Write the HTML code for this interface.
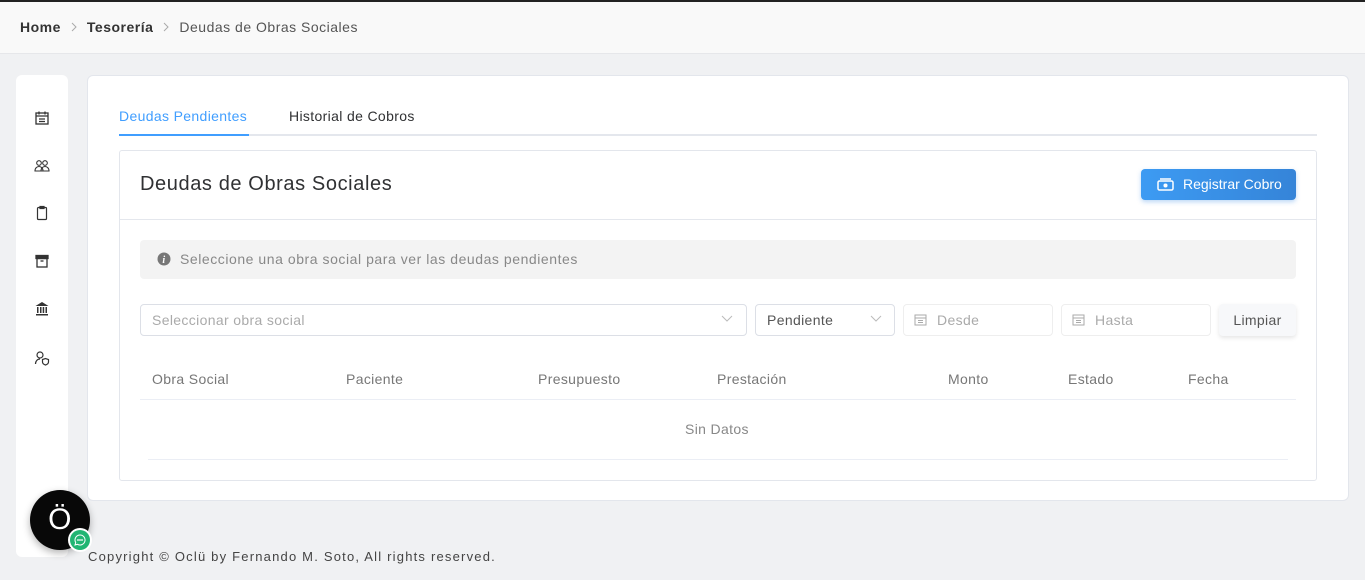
<!DOCTYPE html>
<html><head><meta charset="utf-8"><style>
*{box-sizing:border-box;margin:0;padding:0}
body{width:1365px;height:580px;overflow:hidden;background:#f0f1f3;font-family:"Liberation Sans",sans-serif;position:relative;color:#333;letter-spacing:.35px}
.abs{position:absolute}
.top{left:0;top:0;width:1365px;height:54px;background:#f9f9f9;border-top:2px solid #222;border-bottom:1px solid #e6e7ea}
.bc{left:20px;top:19px;font-size:14px;color:#555;letter-spacing:.5px}
.bc b{color:#333}
.bc .sep{color:#aaa;margin:0 9px;display:inline-block;width:8px}
.side{left:16px;top:75px;width:52px;height:482px;background:#fff;border-radius:6px}
.ic{position:absolute;left:18px;width:16px;height:16px}
.main{left:87px;top:75px;width:1262px;height:426px;background:#fff;border:1px solid #e3e6ec;border-radius:6px}
.tab{font-size:14px;top:108px}
.inner{left:119px;top:150px;width:1198px;height:331px;border:1px solid #e3e6ec;border-radius:3px;background:#fff}
.inp{height:32px;border:1px solid #dcdfe6;border-radius:4px;background:#fff;font-size:14px;color:#aaa;padding:7px 11px}
.th{top:371px;font-size:14px;color:#777}
</style></head><body>
<div class="abs top"></div>
<div class="abs bc"><b>Home</b><span class="sep"><svg width="8" height="10"><path d="M2 1l4 4-4 4" fill="none" stroke="#aaa"/></svg></span><b>Tesorería</b><span class="sep"><svg width="8" height="10"><path d="M2 1l4 4-4 4" fill="none" stroke="#aaa"/></svg></span>Deudas de Obras Sociales</div>
<div class="abs side">
<svg class="ic" style="top:35px" viewBox="0 0 16 16" fill="none" stroke="#333" stroke-width="1.3"><rect x="2" y="3" width="12" height="11"/><path d="M2 6h12M5 1.5v3M11 1.5v3M5 9h6M5 11.5h6"/></svg>
<svg class="ic" style="top:83px" viewBox="0 0 16 16" fill="none" stroke="#333" stroke-width="1.1"><circle cx="5" cy="5" r="2.3"/><circle cx="11" cy="5" r="2.3"/><path d="M1 13c0-3 2-4.5 4-4.5s4 1.5 4 4.5zM7 13c0-3 2-4.5 4-4.5s4 1.5 4 4.5z"/></svg>
<svg class="ic" style="top:130px" viewBox="0 0 16 16" fill="none" stroke="#333" stroke-width="1.2"><rect x="3.5" y="2.5" width="9" height="12" rx="1"/><rect x="6" y="1.5" width="4" height="2" fill="#333"/></svg>
<svg class="ic" style="top:178px" viewBox="0 0 16 16" fill="none" stroke="#333" stroke-width="1.3"><rect x="2" y="2.5" width="12" height="3" fill="#333"/><rect x="3" y="5.5" width="10" height="8.5"/><path d="M6.5 8h3"/></svg>
<svg class="ic" style="top:226px" viewBox="0 0 16 16" fill="#333"><path d="M8 1L1.5 5h13z"/><rect x="2" y="13" width="12" height="1.5"/><rect x="3" y="6" width="1.5" height="6"/><rect x="6" y="6" width="1.5" height="6"/><rect x="8.7" y="6" width="1.5" height="6"/><rect x="11.5" y="6" width="1.5" height="6"/></svg>
<svg class="ic" style="top:275px" viewBox="0 0 16 16" fill="none" stroke="#333" stroke-width="1.2"><circle cx="6" cy="5" r="3"/><path d="M1.5 14c0-3 2-5 4.5-5"/><path d="M8.5 9.5l3-1 3 1v2.5c0 1.5-1.5 2.5-3 3-1.5-.5-3-1.5-3-3z"/></svg>
</div>
<div class="abs main"></div>
<div class="abs tab" style="left:119px;color:#409eff">Deudas Pendientes</div>
<div class="abs tab" style="left:289px;color:#303133">Historial de Cobros</div>
<div class="abs" style="left:119px;top:134px;width:1198px;height:2px;background:#e4e7ed"></div>
<div class="abs" style="left:119px;top:134px;width:130px;height:2px;background:#409eff"></div>
<div class="abs inner"></div>
<div class="abs" style="left:140px;top:173px;font-size:20px;color:#303133;letter-spacing:.6px">Deudas de Obras Sociales</div>
<div class="abs" style="left:120px;top:219px;width:1196px;height:1px;background:#e4e7ed"></div>
<div class="abs" style="left:1141px;top:169px;width:155px;height:31px;border-radius:4px;background:linear-gradient(90deg,#3d9bf3,#3584d8);box-shadow:0 2px 5px rgba(60,140,230,.35);color:#fff;font-size:14px;padding:7px 0 0 42px;letter-spacing:0">Registrar Cobro</div>
<svg class="abs" style="left:1157px;top:178px" width="17" height="13" viewBox="0 0 17 13" fill="none" stroke="#fff" stroke-width="1.5"><rect x="1" y="3" width="15" height="9" rx="1.5"/><path d="M3 1h11"/><circle cx="8.5" cy="7.5" r="1.3" fill="#fff"/></svg>
<div class="abs" style="left:140px;top:240px;width:1156px;height:39px;background:#f3f3f3;border-radius:4px"></div>
<svg class="abs" style="left:157px;top:252px" width="14" height="14" viewBox="0 0 14 14"><circle cx="7" cy="7" r="6.5" fill="#777"/><text x="7" y="11" font-size="10" font-style="italic" font-weight="bold" fill="#fff" text-anchor="middle" font-family="Liberation Serif">i</text></svg>
<div class="abs" style="left:180px;top:251px;font-size:14px;color:#888;letter-spacing:.55px">Seleccione una obra social para ver las deudas pendientes</div>
<div class="abs inp" style="left:140px;top:304px;width:607px">Seleccionar obra social</div>
<div class="abs inp" style="left:755px;top:304px;width:140px;color:#555">Pendiente</div>
<svg class="abs" style="left:721px;top:315px" width="12" height="8"><path d="M1 1l5 5 5-5" fill="none" stroke="#bbb"/></svg>
<svg class="abs" style="left:870px;top:315px" width="12" height="8"><path d="M1 1l5 5 5-5" fill="none" stroke="#bbb"/></svg>
<div class="abs inp" style="left:903px;top:304px;width:150px;border-color:#eee;padding-left:33px">Desde</div>
<div class="abs inp" style="left:1061px;top:304px;width:150px;border-color:#eee;padding-left:33px">Hasta</div>
<svg class="abs" style="left:914px;top:313px" width="13" height="13" viewBox="0 0 13 13" fill="none" stroke="#aaa"><rect x="1" y="2" width="11" height="10"/><path d="M1 5h11M4 7.5h5M4 9.5h5"/></svg>
<svg class="abs" style="left:1072px;top:313px" width="13" height="13" viewBox="0 0 13 13" fill="none" stroke="#aaa"><rect x="1" y="2" width="11" height="10"/><path d="M1 5h11M4 7.5h5M4 9.5h5"/></svg>
<div class="abs" style="left:1219px;top:304px;width:77px;height:32px;border-radius:4px;background:#f7f8fa;box-shadow:0 2px 4px rgba(0,0,0,.1);font-size:14px;color:#555;text-align:center;padding-top:8px">Limpiar</div>
<div class="abs th" style="left:152px">Obra Social</div>
<div class="abs th" style="left:346px">Paciente</div>
<div class="abs th" style="left:538px">Presupuesto</div>
<div class="abs th" style="left:717px">Prestación</div>
<div class="abs th" style="left:948px">Monto</div>
<div class="abs th" style="left:1068px">Estado</div>
<div class="abs th" style="left:1188px">Fecha</div>
<div class="abs" style="left:140px;top:399px;width:1156px;height:1px;background:#ebeef5"></div>
<div class="abs" style="left:685px;top:421px;font-size:14px;color:#888">Sin Datos</div>
<div class="abs" style="left:148px;top:459px;width:1140px;height:1px;background:#ebeef5"></div>
<div class="abs" style="left:88px;top:549px;font-size:13px;color:#444;letter-spacing:1.2px">Copyright © Oclü by Fernando M. Soto, All rights reserved.</div>
<div class="abs" style="left:30px;top:490px;width:60px;height:60px;border-radius:50%;background:#080808;box-shadow:0 3px 8px rgba(0,0,0,.3);color:#fff;font-size:30px;text-align:center;line-height:60px">Ö</div>
<div class="abs" style="left:68px;top:528px;width:24px;height:24px;border-radius:50%;background:#fff"></div>
<div class="abs" style="left:70px;top:530px;width:20px;height:20px;border-radius:50%;background:#21b573"></div>
<svg class="abs" style="left:74px;top:534px" width="12" height="12" viewBox="0 0 12 12" fill="none" stroke="#fff"><path d="M6 1a5 5 0 1 1-2.5 9.3L1 11l.7-2.5A5 5 0 0 1 6 1z"/><circle cx="4" cy="6" r=".4" fill="#fff"/><circle cx="6" cy="6" r=".4" fill="#fff"/><circle cx="8" cy="6" r=".4" fill="#fff"/></svg>
</body></html>
